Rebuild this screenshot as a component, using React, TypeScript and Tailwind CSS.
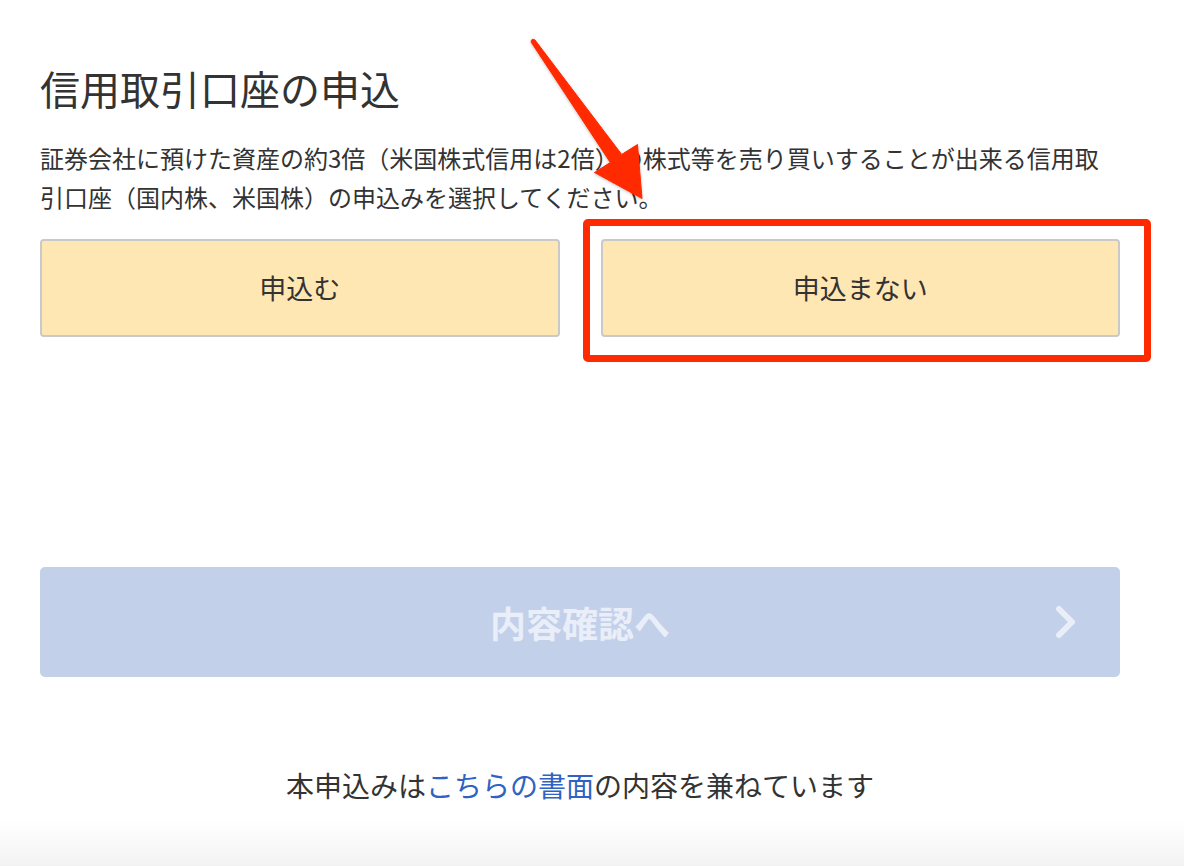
import React from "react"

const font = {
  fontFamily: '"Noto Sans CJK JP", "Noto Sans", "Liberation Sans", sans-serif',
}

function Arrow() {
  // annotation arrow drawn over the page
  return (
    <svg
      className="pointer-events-none absolute left-0 top-0"
      width="1184"
      height="866"
      viewBox="0 0 1184 866"
    >
      <defs>
        <filter id="sh" x="-20%" y="-20%" width="140%" height="140%">
          <feDropShadow dx="0" dy="1" stdDeviation="1.5" floodColor="#000" floodOpacity="0.25" />
        </filter>
      </defs>
      <path
        d="M534.8 39.8 L621.7 154.5 L637.5 144.5 L642 198.5 L594.5 172.5 L610.3 162.5 L531.2 42.2 Q531 38 534.8 39.8 Z"
        fill="#ff2a00"
        strokeLinejoin="round"
        stroke="#ff2a00"
        strokeWidth="1"
        filter="url(#sh)"
      />
    </svg>
  )
}

export default function App() {
  return (
    <div className="relative min-h-[866px] w-[1184px] bg-white text-[#333]" style={font}>
      <div className="pl-10 pr-16 pt-[60px]">
        {/* Title */}
        <h1 className="text-[40px] leading-[56px] font-normal">信用取引口座の申込</h1>

        {/* Description */}
        <p className="mt-[22px] text-[24px] leading-[39px]">
          証券会社に預けた資産の約3倍（米国株式信用は2倍）の株式等を売り買いすることが出来る信用取引口座（国内株、米国株）の申込みを選択してください。
        </p>

        {/* Choices */}
        <div className="mt-[23px] grid grid-cols-2 gap-[41px]">
          <button className="flex h-[98px] items-center justify-center rounded-[4px] border-2 border-[#c9c9c9] bg-[#ffe7b4] text-[27px] text-[#333]">
            申込む
          </button>
          <div className="relative">
            <button className="flex h-[98px] w-full items-center justify-center rounded-[4px] border-2 border-[#c9c9c9] bg-[#ffe7b4] text-[27px] text-[#333]">
              申込まない
            </button>
            <div className="pointer-events-none absolute -left-[18px] -top-[20px] -right-[31px] -bottom-[25px] rounded-[5px] border-[7px] border-[#ff2a00]" />
          </div>
        </div>

        {/* Confirm */}
        <button className="relative mt-[230px] flex h-[110px] w-full items-center justify-center rounded-[5px] bg-[#c3d0ea] text-[36px] font-bold text-[#e9eef8]">
          内容確認へ
          <svg className="absolute right-[42px] top-1/2 -translate-y-1/2" width="24" height="34" viewBox="0 0 24 34">
            <path d="M5 4 L18 17 L5 30" fill="none" stroke="#e9eef8" strokeWidth="6" strokeLinecap="round" strokeLinejoin="round" />
          </svg>
        </button>

        {/* Footer note */}
        <p className="mt-[88px] text-center text-[28px] leading-[40px]">
          本申込みは<span className="text-[#2f62c2]">こちらの書面</span>の内容を兼ねています
        </p>
      </div>

      <div className="mt-[15px] h-[46px] bg-gradient-to-b from-white to-[#f3f3f3]" />

      <Arrow />
    </div>
  )
}
